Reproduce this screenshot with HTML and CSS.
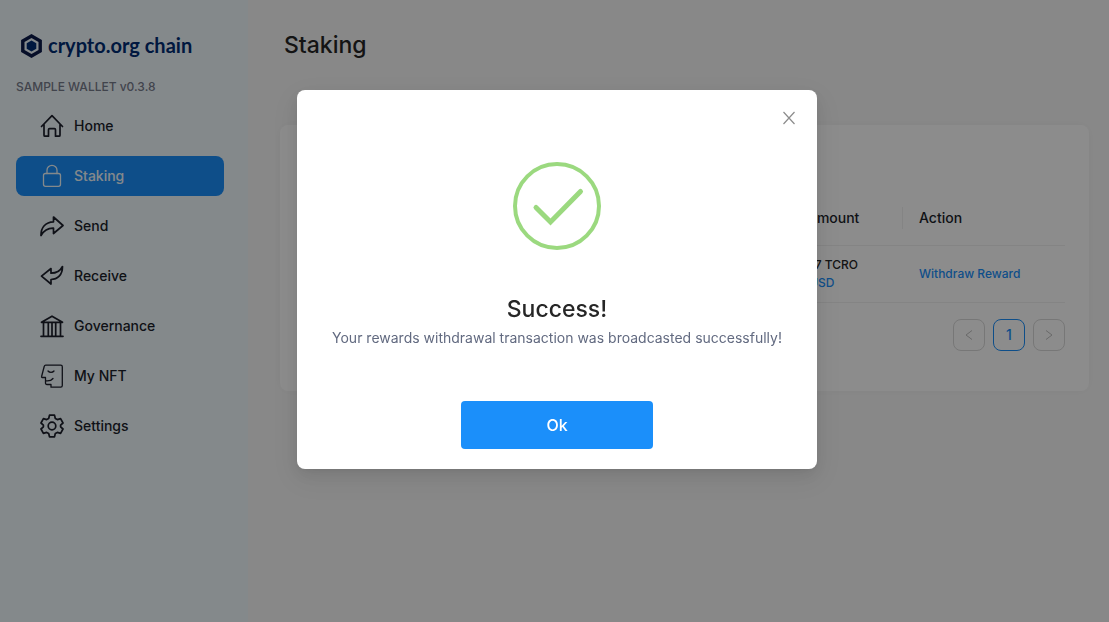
FILE: index.html
```html
<!DOCTYPE html>
<html lang="en">
<head>
<meta charset="utf-8">
<meta name="viewport" content="width=device-width, initial-scale=1">
<title>Staking</title>
<link rel="stylesheet" href="styles.css">
</head>
<body>
<div class="layout">
  <aside class="sidebar">
    <div class="logo">
      <svg class="logo-mark" viewBox="0 0 22 24" aria-hidden="true">
        <path fill="#0b1a4a" fill-rule="evenodd" d="M11 0 21.400 6v12L11 24 .6 18V6zM11 4 4 8v8l7 4 7-4V8z"/>
        <path fill="#002d74" d="M11 6.500 15.800 9.250v5.500L11 17.500 6.200 14.750v-5.500z"/>
      </svg>
      <span class="logo-text">crypto.org chain</span>
    </div>
    <div class="version">SAMPLE WALLET v0.3.8</div>
    <nav class="menu">
      <a class="menu-item" href="#home">
        <svg class="icon" viewBox="0 0 24 24"><path d="M1.500 12.500 12 1.700l10.500 10.800M4 10.500v10.700q0 1 1 1h3.500v-6.500q0-1 1-1h5q1 0 1 1v6.500H19q1 0 1-1V10.500"/></svg>
        <span>Home</span>
      </a>
      <a class="menu-item active" href="#staking">
        <svg class="icon thin" viewBox="0 0 24 24"><rect x="3.500" y="9.500" width="17" height="12.800" rx="2"/><path d="M7 9.500V6.200a5 4.800 0 0 1 10 0v3.300"/></svg>
        <span>Staking</span>
      </a>
      <a class="menu-item" href="#send">
        <svg class="icon" viewBox="0 0 24 24"><path d="M13.500 3 23 11.500l-9.500 8v-5.300C8 14 4.500 15.500 1 21.500.8 13.500 5.500 8 13.500 7.800z"/></svg>
        <span>Send</span>
      </a>
      <a class="menu-item" href="#receive">
        <svg class="icon" viewBox="0 0 24 24"><path d="M11 4.500 1.500 12.200 11 20v-4.500C17.500 15.500 22.500 11 22.500 2.500 20 7.500 17 9.200 11 9.200z"/></svg>
        <span>Receive</span>
      </a>
      <a class="menu-item" href="#governance">
        <svg class="icon" viewBox="0 0 24 24"><path d="M1.500 8.300 12 2.200l10.500 6.100zM1 22.300h22M3.500 8.500v13.500M8.300 8.500v13.500M12 8.500v13.500M15.700 8.500v13.500M20.500 8.500v13.500"/></svg>
        <span>Governance</span>
      </a>
      <a class="menu-item" href="#nft">
        <svg class="icon thin" viewBox="0 0 24 24"><path d="M5.700 1.200h15q1.600 0 1.600 1.600v18.800q0 1.600-1.600 1.600H11v-2.700H7q-1.500 0-1.500-1.500v-5.500H2.300q-1 0-.7-1L4.200 2.500Q4.600 1.200 5.700 1.200zM8 7c1.500 1.800 4.500 1.800 6 0M5.500 16.800c3.500.5 6-.3 7.500-2.300"/></svg>
        <span>My NFT</span>
      </a>
      <a class="menu-item" href="#settings">
        <svg class="icon" viewBox="0 0 24 24"><path d="M9.500 1.200h5l.8 3.300 2 1.100 3.300-1L23 9l-2.400 2.200v1.600L23 15l-2.400 4.400-3.300-1-2 1.100-.8 3.300h-5l-.8-3.300-2-1.100-3.300 1L1 15l2.400-2.200v-1.600L1 9l2.400-4.400 3.300 1 2-1.100z"/><circle cx="12" cy="12" r="3.800"/></svg>
        <span>Settings</span>
      </a>
    </nav>
  </aside>
  <main class="content">
    <h1 class="page-title">Staking</h1>
    <section class="card">
      <table class="rewards">
        <thead>
          <tr><th class="col-validator">Validator Address</th><th class="col-amount">Reward Amount</th><th class="col-action">Action</th></tr>
        </thead>
        <tbody>
          <tr>
            <td>Validator</td>
            <td>0.00012347 TCRO<br><span class="fiat">~ $0.000 USD</span></td>
            <td><a class="link" href="#withdraw">Withdraw Reward</a></td>
          </tr>
        </tbody>
      </table>
      <div class="pagination">
        <button class="page" type="button" aria-label="Previous page" disabled><svg class="chevron" viewBox="0 0 10 12"><path d="M8 1.500 2 6l6 4.500"/></svg></button>
        <button class="page current" type="button">1</button>
        <button class="page" type="button" aria-label="Next page" disabled><svg class="chevron" viewBox="0 0 10 12"><path d="M2 1.500 8 6l-6 4.500"/></svg></button>
      </div>
    </section>
  </main>
</div>
<div class="mask">
  <div class="modal" role="dialog" aria-modal="true" aria-labelledby="modal-title">
    <button class="close" type="button" aria-label="Close"><svg class="close-icon" viewBox="0 0 14 14"><path d="M1.500 1 12.500 13M12.500 1 1.500 13"/></svg></button>
    <svg class="success-icon" viewBox="0 0 88 88" aria-hidden="true"><circle cx="44" cy="44" r="42"/><path d="M23 45.500 37.500 60 67.500 29.500"/></svg>
    <h2 class="modal-title" id="modal-title">Success!</h2>
    <p class="modal-text">Your rewards withdrawal transaction was broadcasted successfully!</p>
    <button class="ok" type="button">Ok</button>
  </div>
</div>
</body>
</html>
```

FILE: styles.css
```css
* { box-sizing: border-box; }
body {
  margin: 0;
  font-family: Inter, "Liberation Sans", sans-serif;
  font-size: 14px;
  color: #262626;
  background: #f8f8f8;
}
button { font: inherit; cursor: pointer; }
a { text-decoration: none; }

.layout { display: flex; min-height: 100vh; }

.sidebar {
  flex: 0 0 248px;
  padding: 32px 24px 0 16px;
  background: #f1f9fe;
}
.logo { display: flex; align-items: center; gap: 5px; height: 28px; padding-left: 4px; }
.logo-mark { width: 23px; height: 24px; }
.logo-text {
  padding-bottom: 3px;
  font-family: Lato, sans-serif;
  font-size: 20px;
  font-weight: 700;
  color: #002d74;
  white-space: nowrap;
}
.version { margin-top: 18px; font-size: 12px; line-height: 18px; font-weight: 500; color: #777c8b; }
.menu { display: flex; flex-direction: column; gap: 10px; margin-top: 10px; }
.menu-item {
  display: flex;
  align-items: center;
  gap: 10px;
  height: 40px;
  padding-left: 24px;
  border-radius: 8px;
  font-weight: 500;
  color: #1c1f2b;
}
.menu-item span { padding-bottom: 2px; }
.menu-item.active { background: #1b8ffa; color: #f1f9fe; }
.icon {
  width: 24px;
  height: 24px;
  fill: none;
  stroke: currentColor;
  stroke-width: 1.7;
  stroke-linejoin: round;
  stroke-linecap: round;
}
.icon.thin { stroke-width: 1.3; }

.content { flex: 1; min-width: 0; padding: 28px 20px 0 32px; }
.page-title { margin: 0 4px; font-size: 23px; line-height: 34px; font-weight: 500; }
.card {
  margin-top: 63px;
  padding: 65px 24px 40px;
  border-radius: 8px;
  background: #fff;
  box-shadow: 0 0 12px rgba(0, 0, 0, 0.03);
}
.rewards { width: 100%; table-layout: fixed; border-collapse: collapse; text-align: left; }
.rewards th {
  position: relative;
  height: 55px;
  padding: 0 16px;
  border-bottom: 1px solid #f0f0f0;
  font-weight: 500;
  color: #1c1f2b;
}
.rewards th:not(:last-child)::after {
  content: "";
  position: absolute;
  top: 17px;
  right: 0;
  width: 1px;
  height: 22px;
  background: #f0f0f0;
}
.rewards td {
  height: 57px;
  padding: 0 16px;
  border-bottom: 1px solid #f0f0f0;
  font-size: 12px;
  line-height: 18px;
  font-weight: 500;
}
.col-amount { width: 166px; }
.col-action { width: 162px; }
.fiat, .link { color: #1b8ffa; }
.pagination { display: flex; justify-content: flex-end; gap: 8px; margin-top: 16px; }
.page {
  display: grid;
  place-items: center;
  width: 32px;
  height: 32px;
  padding: 0;
  border: 1px solid #d9d9d9;
  border-radius: 8px;
  background: #fff;
  color: #bfbfbf;
}
.page.current { border-color: #1b8ffa; color: #1b8ffa; font-weight: 500; }
.chevron { width: 10px; height: 12px; fill: none; stroke: currentColor; stroke-width: 1; }

.mask {
  position: fixed;
  inset: 0;
  display: flex;
  align-items: flex-start;
  justify-content: center;
  padding: 90px 0 0 5px;
  background: rgba(0, 0, 0, 0.45);
}
.modal {
  position: relative;
  display: flex;
  flex-direction: column;
  align-items: center;
  width: 520px;
  padding: 72px 24px 20px;
  border-radius: 8px;
  background: #fff;
  box-shadow: 0 3px 6px -4px rgba(0, 0, 0, 0.12), 0 6px 16px rgba(0, 0, 0, 0.08), 0 9px 28px 8px rgba(0, 0, 0, 0.05);
}
.close {
  position: absolute;
  top: 12px;
  right: 12px;
  display: grid;
  place-items: center;
  width: 32px;
  height: 32px;
  padding: 0;
  border: 0;
  background: none;
  color: #8c8c8c;
}
.close-icon { width: 14px; height: 14px; fill: none; stroke: currentColor; stroke-width: 1.2; }
.success-icon {
  width: 88px;
  height: 88px;
  fill: none;
  stroke: #9bd97f;
  stroke-width: 4;
  stroke-linecap: round;
}
.success-icon path { stroke-width: 5; }
.modal-title { margin: 41px 0 0; font-size: 23px; line-height: 36px; font-weight: 500; }
.modal-text { margin: 0; font-size: 14px; line-height: 22px; font-weight: 400; color: #626a80; }
.ok {
  width: 192px;
  height: 48px;
  margin-top: 52px;
  border: 0;
  border-radius: 4px;
  background: #1b8ffa;
  color: #fff;
  font-size: 16px;
  font-weight: 500;
}
```
